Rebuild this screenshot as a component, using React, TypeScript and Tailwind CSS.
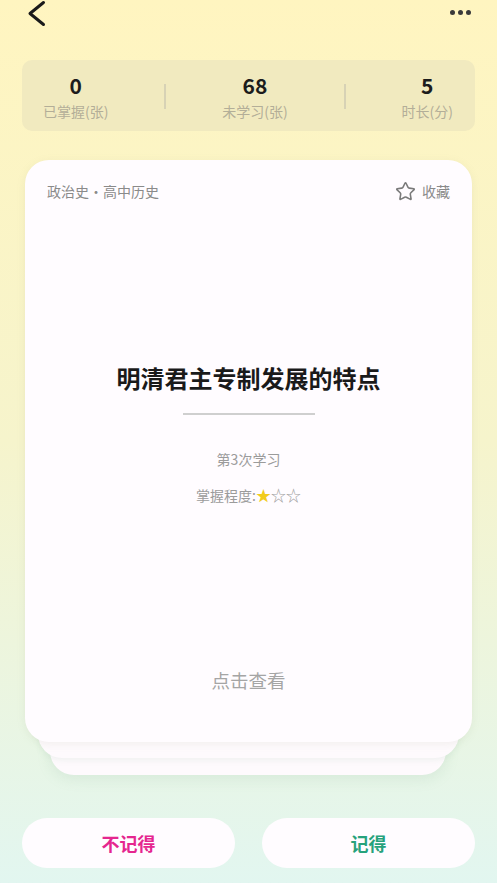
import { Star } from 'lucide-react'

const font = { fontFamily: '"Noto Sans CJK SC", "Noto Sans", sans-serif' }

function Stat({ value, label }: { value: string; label: string }) {
  return (
    <div className="flex flex-col items-center">
      <span className="text-[21px] font-bold leading-[26px] text-[#1c1c1c]">{value}</span>
      <span className="text-[14px] leading-[20px] mt-[3px] text-[#b3ae98]">{label}</span>
    </div>
  )
}

export default function App() {
  return (
    <div
      className="w-[497px] h-[883px] overflow-hidden bg-gradient-to-b from-[#fff5c0] via-[#f6f4cc] to-[#e2f6f0] relative"
      style={font}
    >
      {/* header */}
      <div className="flex items-start justify-between h-[28px] pl-[27px] pr-[26px]">
        <svg width="19" height="27" viewBox="0 0 19 27">
          <polyline points="16.5,2.5 3,13.5 16.5,24.5" fill="none" stroke="#1a1a1a" strokeWidth="3" strokeLinecap="round" strokeLinejoin="round" />
        </svg>
        <div className="flex gap-[3px] mt-[10px]">
          <span className="w-[5px] h-[5px] rounded-full bg-[#3a3a3a]" />
          <span className="w-[5px] h-[5px] rounded-full bg-[#3a3a3a]" />
          <span className="w-[5px] h-[5px] rounded-full bg-[#3a3a3a]" />
        </div>
      </div>

      {/* stats */}
      <div className="mx-[22px] mt-[32px] h-[71px] rounded-[10px] bg-[#f1eabf] flex items-center justify-between pl-[21px] pr-[22px] pt-[1px]">
        <Stat value="0" label="已掌握(张)" />
        <div className="w-[2px] h-[25px] bg-[#d7d2b5]" />
        <Stat value="68" label="未学习(张)" />
        <div className="w-[2px] h-[25px] bg-[#d7d2b5]" />
        <Stat value="5" label="时长(分)" />
      </div>

      {/* card stack */}
      <div className="relative mx-[25px] mt-[29px] h-[582px]">
        <div className="absolute left-[25px] right-[26px] top-[20px] -bottom-[33px] rounded-[24px] bg-[#fefafd] shadow-[0_4px_14px_rgba(120,170,140,0.15)]" />
        <div className="absolute left-[13px] right-[13px] top-[10px] -bottom-[16px] rounded-[24px] bg-[#fefafd] shadow-[0_2px_6px_rgba(120,170,140,0.12)]" />
        <div className="relative h-full rounded-[24px] bg-[#fffcff] flex flex-col shadow-[0_2px_8px_rgba(150,160,120,0.12)]">
          <div className="flex items-center justify-between pl-[22px] pr-[22px] pt-[21px]">
            <span className="text-[14px] text-[#8a8a8a]">政治史・高中历史</span>
            <div className="flex items-center gap-[6px]">
              <Star className="w-[21px] h-[21px] text-[#7a7a7a]" strokeWidth={1.8} />
              <span className="text-[14px] text-[#8a8a8a]">收藏</span>
            </div>
          </div>
          <div className="flex flex-col items-center mt-[159px]">
            <h1 className="text-[24px] font-bold text-[#1a1a1a] leading-[34px]">明清君主专制发展的特点</h1>
            <div className="w-[132px] h-[2px] bg-[#cfcfcf] mt-[18px]" />
            <p className="text-[14px] text-[#9b9b9b] mt-[34px]">第3次学习</p>
            <p className="text-[14px] text-[#9b9b9b] mt-[14px] flex items-center">
              掌握程度:
              <span className="text-[#f2cc1c] text-[15px]">★</span>
              <span className="text-[#a0a0a0] text-[15px]">☆☆</span>
            </p>
            <p className="text-[18.5px] text-[#a5a5a5] mt-[160px]">点击查看</p>
          </div>
        </div>
      </div>

      {/* buttons */}
      <div className="absolute left-[22px] right-[22px] top-[818px] flex gap-[27px]">
        <button className="flex-1 h-[50px] rounded-full bg-[#fffcff] text-[18px] font-bold text-[#e5268f]">
          不记得
        </button>
        <button className="flex-1 h-[50px] rounded-full bg-[#fffcff] text-[18px] font-bold text-[#27a27c]">
          记得
        </button>
      </div>
    </div>
  )
}
